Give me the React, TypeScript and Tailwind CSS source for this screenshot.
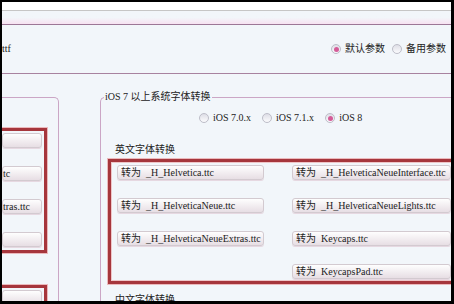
import React from 'react';
import clsx from 'clsx';

// cropped view of a font conversion tool window

const Radio: React.FC<{ checked?: boolean }> = ({ checked }) => (
  <span className="flex h-[10px] w-[10px] shrink-0 items-center justify-center rounded-full border border-[#bdbdc8] bg-linear-to-b from-[#dedee6] to-[#fbfbfd]">
    {checked && <span className="h-[5px] w-[5px] rounded-full bg-[#d45c98]" />}
  </span>
);

const Option: React.FC<{ label: string; checked?: boolean }> = ({ label, checked }) => (
  <div className="flex items-center gap-[4px]">
    <Radio checked={checked} />
    <span>{label}</span>
  </div>
);

const Btn: React.FC<{ children?: React.ReactNode; className?: string }> = ({ children, className }) => (
  <div
    className={clsx(
      'flex h-[15px] items-center overflow-hidden whitespace-nowrap rounded-[3px] border border-[#d3cad0] bg-linear-to-b from-[#fefefe] to-[#e7dee4] shadow-[0_1px_0_#e6d8e1]',
      className
    )}
  >
    {children}
  </div>
);

const Convert: React.FC<{ name: string }> = ({ name }) => (
  <Btn className="pl-[3px]">
    <span>转为</span>
    <span className="ml-[5px]">{name}</span>
  </Btn>
);

const rows: [string | null, string][] = [
  ['_H_Helvetica.ttc', '_H_HelveticaNeueInterface.ttc'],
  ['_H_HelveticaNeue.ttc', '_H_HelveticaNeueLights.ttc'],
  ['_H_HelveticaNeueExtras.ttc', 'Keycaps.ttc'],
  [null, 'KeycapsPad.ttc'],
];

const App: React.FC = () => {
  return (
    <div className="h-[304px] w-[454px] bg-black pb-[3px] pl-[2px] pr-[3px] pt-[2px]">
      <div className="flex h-full flex-col overflow-hidden bg-[#f2f6fa] font-['Liberation_Serif','Noto_Sans_CJK_SC',serif] text-[10px] leading-[12px] text-[#222]">
        <div className="h-[9px] shrink-0 border-b border-[#c6c6c6] bg-white" />
        <div className="h-[14px] shrink-0 border-b border-[#9c7796] bg-linear-to-b from-[#f2f6fa] from-50% to-[#f7e2f1]" />

        {/* params row */}
        <div className="flex h-[49px] shrink-0 items-center justify-between border-b border-[#a8829f] pr-[5px]">
          <span>ttf</span>
          <div className="flex items-center gap-[7px]">
            <Option label="默认参数" checked />
            <Option label="备用参数" />
          </div>
        </div>

        <div className="h-[23px] shrink-0" />

        <div className="flex flex-1 items-start">
          {/* left group, cut off */}
          <div className="h-full w-[57px] shrink-0 rounded-tr-[5px] border-r border-t border-[#cba6c5] pt-[30px]">
            <div className="w-[45px] border-y-[3px] border-r-[3px] border-[#a6363c] pb-[3px] pr-[2px] pt-[2px] shadow-[0_0_0_1px_#ebb9bc]">
              <div className="flex flex-col gap-[18px]">
                <Btn />
                <Btn>tc</Btn>
                <Btn>tras.ttc</Btn>
                <Btn />
              </div>
            </div>
            <div className="mt-[32px] h-[40px] w-[45px] border-r-[3px] border-t-[3px] border-[#a6363c] pr-[2px] pt-[2px] shadow-[0_0_0_1px_#ebb9bc]">
              <Btn />
            </div>
          </div>

          {/* iOS 7+ group */}
          <div className="ml-[41px] h-full w-[420px] shrink-0 rounded-tl-[5px] border-l border-t border-[#cba6c5] pl-[3px]">
            <div className="-mt-[7px] w-fit bg-[#f2f6fa] px-[1px]">iOS 7 以上系统字体转换</div>

            <div className="ml-[95px] mt-[9px] flex items-center gap-[11px]">
              <Option label="iOS 7.0.x" />
              <Option label="iOS 7.1.x" />
              <Option label="iOS 8" checked />
            </div>

            <div className="ml-[11px] mt-[20px]">英文字体转换</div>

            <div className="ml-[4px] mt-[3px] border-[3px] border-[#a6363c] pb-[2px] pl-[6px] pt-[3px] shadow-[0_0_0_1px_#ebb9bc,inset_0_0_0_1px_#efc6c8]">
              <div className="grid grid-cols-[147px_159px] gap-x-[28px] gap-y-[18px]">
                {rows.map(([a, b], i) => (
                  <React.Fragment key={i}>
                    {a ? <Convert name={a} /> : <div />}
                    <Convert name={b} />
                  </React.Fragment>
                ))}
              </div>
            </div>

            <div className="ml-[11px] mt-[10px]">中文字体转换</div>
          </div>
        </div>
      </div>
    </div>
  );
};

export default App;
